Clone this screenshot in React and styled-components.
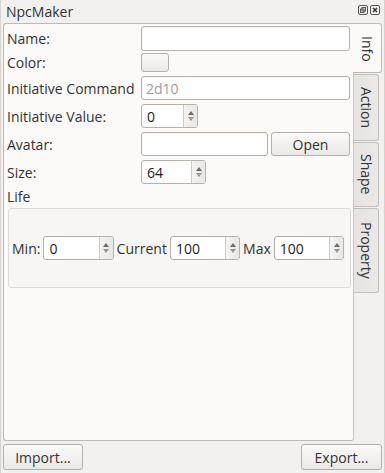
import styled, { createGlobalStyle } from "styled-components";

const Global = createGlobalStyle`
  html, body {
    margin: 0;
    padding: 0;
    background: #f2f1f0;
  }
  body {
    font-family: "Open Sans", "DejaVu Sans", sans-serif;
    font-size: 14px;
    color: #333333;
  }
`;

const Window = styled.div`
  width: 385px;
  height: 473px;
  box-sizing: border-box;
  display: flex;
  flex-direction: column;
  background: #f2f1f0;
  border-left: 1px solid #d6d3cf;
  border-right: 1px solid #d6d3cf;
`;

const TitleBar = styled.div`
  height: 22px;
  display: flex;
  align-items: center;
  justify-content: space-between;
  padding: 0 4px 0 5px;
  font-size: 14px;
  color: #333333;
`;

const TitleButtons = styled.div`
  display: flex;
  gap: 2px;
  margin-top: -3px;
`;

const Body = styled.div`
  flex: 1;
  display: flex;
  padding: 1px 2px 0 2px;
  min-height: 0;
`;

const Panel = styled.div`
  flex: 1;
  background: #fbfaf9;
  border: 1px solid #bdb9b4;
  border-right-color: #c9c5c0;
  border-radius: 3px 0 3px 3px;
  padding: 2px 3px 0 3px;
  display: flex;
  flex-direction: column;
  gap: 4px;
  height: 418px;
  box-sizing: border-box;
`;

const TabBar = styled.div`
  display: flex;
  flex-direction: column;
  width: 28px;
`;

const Tab = styled.div`
  writing-mode: vertical-rl;
  display: flex;
  align-items: center;
  justify-content: center;
  box-sizing: border-box;
  height: ${(p) => p.$h}px;
  font-size: 14px;
  color: #333333;
  ${(p) =>
    p.$active
      ? `
    background: #fbfaf9;
    border: 1px solid #bdb9b4;
    border-left: none;
    border-radius: 0 3px 3px 0;
    margin-left: -1px;
    width: 29px;
    padding-top: 2px;
  `
      : `
    background: linear-gradient(to right, #e6e3e0, #ebe9e7);
    border: 1px solid #c2beb9;
    border-left: none;
    border-radius: 0 3px 3px 0;
    width: 25px;
    margin-top: 1px;
  `}
`;

const Row = styled.div`
  display: grid;
  grid-template-columns: 134px 1fr;
  align-items: center;
  height: ${(p) => p.$h || 24}px;
  margin-top: ${(p) => p.$mt || 0}px;
`;

const Label = styled.span`
  white-space: nowrap;
`;

const Field = styled.div`
  display: flex;
  gap: 3px;
  align-items: stretch;
  height: 100%;
`;

const TextInput = styled.div`
  box-sizing: border-box;
  flex: ${(p) => (p.$w ? "none" : 1)};
  width: ${(p) => (p.$w ? `${p.$w}px` : "auto")};
  background: #ffffff;
  border: 1px solid #b6b1ab;
  border-radius: 3px;
  padding: 0 4px;
  display: flex;
  align-items: center;
  color: ${(p) => (p.$placeholder ? "#a09c98" : "#202020")};
  box-shadow: inset 0 1px 1px rgba(0, 0, 0, 0.04);
`;

const Button = styled.div`
  box-sizing: border-box;
  width: ${(p) => (p.$w ? `${p.$w}px` : "auto")};
  height: ${(p) => (p.$h ? `${p.$h}px` : "100%")};
  border: 1px solid #b3afaa;
  border-radius: 3px;
  background: linear-gradient(#fafaf9, #ebe9e7);
  display: flex;
  align-items: center;
  justify-content: center;
  color: #333333;
  font-size: 14px;
`;

const Spin = styled.div`
  box-sizing: border-box;
  width: ${(p) => (p.$w ? `${p.$w}px` : "auto")};
  flex: ${(p) => (p.$w ? "none" : 1)};
  height: 24px;
  background: #ffffff;
  border: 1px solid #b6b1ab;
  border-radius: 3px;
  display: flex;
  align-items: stretch;
  overflow: hidden;
`;

const SpinValue = styled.div`
  flex: 1;
  display: flex;
  align-items: center;
  padding-left: 5px;
  color: #1c1c1c;
`;

const SpinArrows = styled.div`
  width: 13px;
  border-left: 1px solid #cfcbc6;
  background: linear-gradient(to right, #f4f3f2, #e9e7e5);
  display: flex;
  flex-direction: column;
  align-items: center;
  justify-content: center;
  gap: 2px;
`;

const Arrow = styled.div`
  width: 0;
  height: 0;
  border-left: 3.5px solid transparent;
  border-right: 3.5px solid transparent;
  ${(p) =>
    p.$down
      ? "border-top: 4px solid #9a958f;"
      : "border-bottom: 4px solid #6f6a65;"}
`;

const LifeTitle = styled.div`
  height: 16px;
  display: flex;
  align-items: center;
`;

const GroupBox = styled.div`
  margin: 0 -1px 0 1px;
  height: 80px;
  box-sizing: border-box;
  border: 1px solid #dedad6;
  border-radius: 3px;
  background: #f7f6f5;
  display: flex;
  align-items: center;
  gap: 3px;
  padding: 0 6px 0 3px;
`;

const Footer = styled.div`
  display: flex;
  justify-content: space-between;
  padding: 4px 2px 3px 2px;
`;

const SpinBox = ({ value, w }) => (
  <Spin $w={w}>
    <SpinValue>{value}</SpinValue>
    <SpinArrows>
      <Arrow />
      <Arrow $down />
    </SpinArrows>
  </Spin>
);

const FloatIcon = () => (
  <svg width="10" height="10" viewBox="0 0 10 10">
    <rect x="0.5" y="0.5" width="9" height="9" rx="1.5" fill="none" stroke="#5a5652" />
    <rect x="4" y="2.5" width="3.5" height="3.5" fill="none" stroke="#5a5652" />
    <rect x="2.5" y="4" width="3.5" height="3.5" fill="none" stroke="#5a5652" />
  </svg>
);

const CloseIcon = () => (
  <svg width="10" height="10" viewBox="0 0 10 10">
    <rect x="0.5" y="0.5" width="9" height="9" rx="1.5" fill="none" stroke="#5a5652" />
    <path d="M3 3 L7 7 M7 3 L3 7" stroke="#3c3834" strokeWidth="1.6" />
  </svg>
);

export default function App() {
  return (
    <>
      <Global />
      <Window>
        <TitleBar>
          <span>NpcMaker</span>
          <TitleButtons>
            <FloatIcon />
            <CloseIcon />
          </TitleButtons>
        </TitleBar>
        <Body>
          <Panel>
            <Row $h={25}>
              <Label>Name:</Label>
              <Field>
                <TextInput />
              </Field>
            </Row>
            <Row $h={19} $mt={-2}>
              <Label>Color:</Label>
              <Field>
                <Button $w={28} $h={19} />
              </Field>
            </Row>
            <Row>
              <Label>Initiative Command</Label>
              <Field>
                <TextInput $placeholder>2d10</TextInput>
              </Field>
            </Row>
            <Row>
              <Label>Initiative Value:</Label>
              <Field>
                <SpinBox value="0" w={57} />
              </Field>
            </Row>
            <Row>
              <Label>Avatar:</Label>
              <Field>
                <TextInput $w={127} />
                <Button $w={79} $h={24}>Open</Button>
              </Field>
            </Row>
            <Row>
              <Label>Size:</Label>
              <Field>
                <SpinBox value="64" w={65} />
              </Field>
            </Row>
            <LifeTitle>Life</LifeTitle>
            <GroupBox>
              <Label>Min:</Label>
              <SpinBox value="0" />
              <Label>Current</Label>
              <SpinBox value="100" />
              <Label>Max</Label>
              <SpinBox value="100" />
            </GroupBox>
          </Panel>
          <TabBar>
            <Tab $active $h={50}>Info</Tab>
            <Tab $h={67}>Action</Tab>
            <Tab $h={65}>Shape</Tab>
            <Tab $h={85}>Property</Tab>
          </TabBar>
        </Body>
        <Footer>
          <Button $w={80} $h={26}>Import...</Button>
          <Button $w={81} $h={26}>Export...</Button>
        </Footer>
      </Window>
    </>
  );
}
